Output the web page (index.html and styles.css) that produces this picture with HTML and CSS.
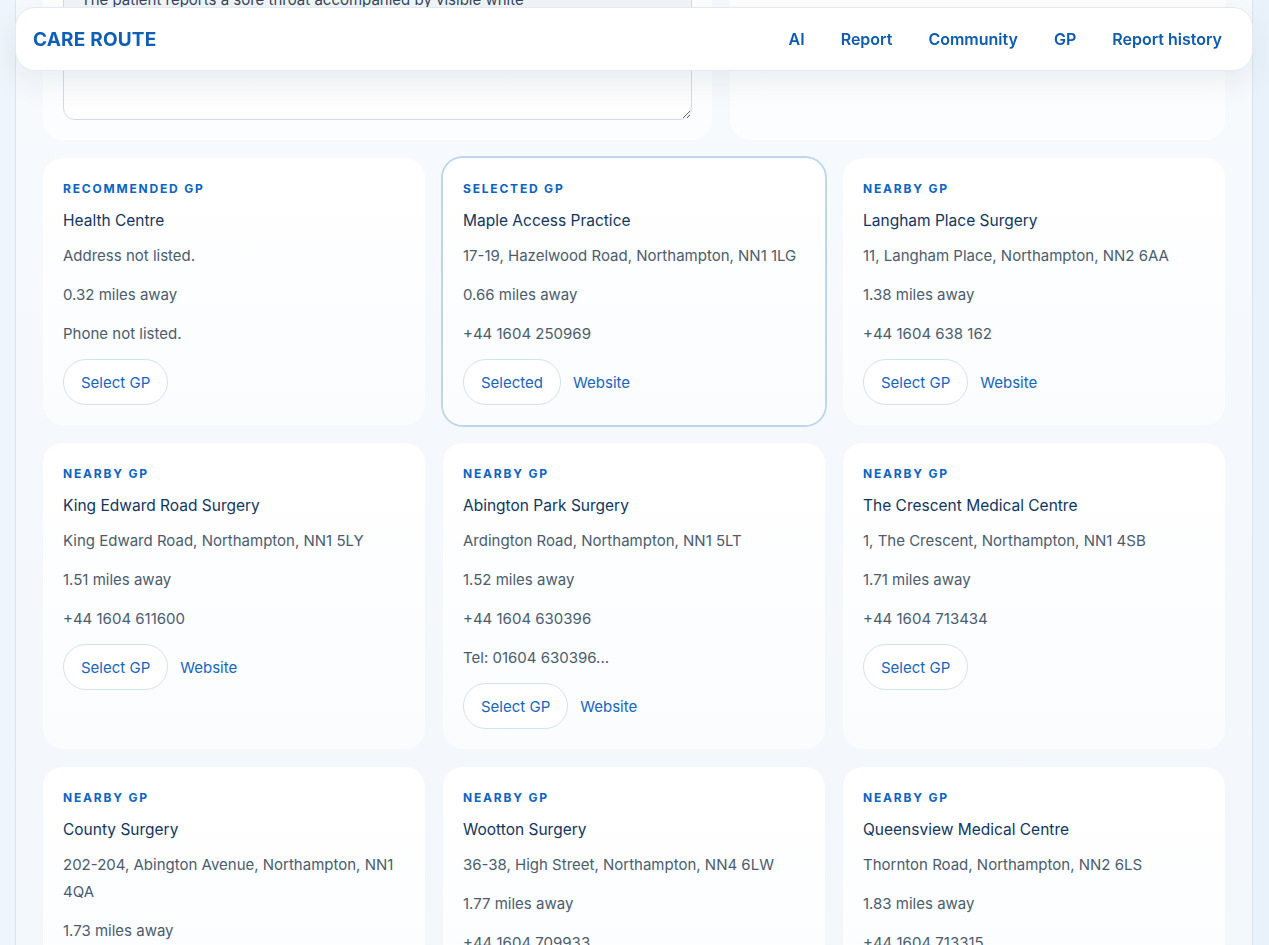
FILE: index.html
```html
<!DOCTYPE html>
<html lang="en">
<head>
<meta charset="utf-8">
<title>Care Route</title>
<link rel="stylesheet" href="styles.css">
</head>
<body>
<header class="topbar">
  <div class="brand">CARE ROUTE</div>
  <nav class="nav">
    <a href="#">AI</a>
    <a href="#">Report</a>
    <a href="#">Community</a>
    <a href="#">GP</a>
    <a href="#">Report history</a>
  </nav>
</header>

<main class="shell">
  <section class="top-row">
    <div class="panel">
      <textarea class="symptoms">The patient reports a sore throat accompanied by visible white
patches on the tonsils.</textarea>
    </div>
    <div class="panel"></div>
  </section>

  <section class="gp-grid">
    <article class="card">
      <div class="tag">Recommended GP</div>
      <h3 class="name">Health Centre</h3>
      <p>Address not listed.</p>
      <p>0.32 miles away</p>
      <p>Phone not listed.</p>
      <div class="actions"><button class="pill">Select GP</button></div>
    </article>

    <article class="card selected">
      <div class="tag">Selected GP</div>
      <h3 class="name">Maple Access Practice</h3>
      <p>17-19, Hazelwood Road, Northampton, NN1 1LG</p>
      <p>0.66 miles away</p>
      <p>+44 1604 250969</p>
      <div class="actions"><button class="pill">Selected</button><a class="link" href="#">Website</a></div>
    </article>

    <article class="card">
      <div class="tag">Nearby GP</div>
      <h3 class="name">Langham Place Surgery</h3>
      <p>11, Langham Place, Northampton, NN2 6AA</p>
      <p>1.38 miles away</p>
      <p>+44 1604 638 162</p>
      <div class="actions"><button class="pill">Select GP</button><a class="link" href="#">Website</a></div>
    </article>

    <article class="card">
      <div class="tag">Nearby GP</div>
      <h3 class="name">King Edward Road Surgery</h3>
      <p>King Edward Road, Northampton, NN1 5LY</p>
      <p>1.51 miles away</p>
      <p>+44 1604 611600</p>
      <div class="actions"><button class="pill">Select GP</button><a class="link" href="#">Website</a></div>
    </article>

    <article class="card">
      <div class="tag">Nearby GP</div>
      <h3 class="name">Abington Park Surgery</h3>
      <p>Ardington Road, Northampton, NN1 5LT</p>
      <p>1.52 miles away</p>
      <p>+44 1604 630396</p>
      <p>Tel: 01604 630396...</p>
      <div class="actions"><button class="pill">Select GP</button><a class="link" href="#">Website</a></div>
    </article>

    <article class="card">
      <div class="tag">Nearby GP</div>
      <h3 class="name">The Crescent Medical Centre</h3>
      <p>1, The Crescent, Northampton, NN1 4SB</p>
      <p>1.71 miles away</p>
      <p>+44 1604 713434</p>
      <div class="actions"><button class="pill">Select GP</button></div>
    </article>

    <article class="card">
      <div class="tag">Nearby GP</div>
      <h3 class="name">County Surgery</h3>
      <p class="addr-wide">202-204, Abington Avenue, Northampton, NN1 4QA</p>
      <p>1.73 miles away</p>
      <p>+44 1604 622644</p>
      <div class="actions"><button class="pill">Select GP</button><a class="link" href="#">Website</a></div>
    </article>

    <article class="card">
      <div class="tag">Nearby GP</div>
      <h3 class="name">Wootton Surgery</h3>
      <p>36-38, High Street, Northampton, NN4 6LW</p>
      <p>1.77 miles away</p>
      <p>+44 1604 709933</p>
      <div class="actions"><button class="pill">Select GP</button><a class="link" href="#">Website</a></div>
    </article>

    <article class="card">
      <div class="tag">Nearby GP</div>
      <h3 class="name">Queensview Medical Centre</h3>
      <p>Thornton Road, Northampton, NN2 6LS</p>
      <p>1.83 miles away</p>
      <p>+44 1604 713315</p>
      <div class="actions"><button class="pill">Select GP</button><a class="link" href="#">Website</a></div>
    </article>
  </section>
</main>
</body>
</html>
```

FILE: styles.css
```css
* { box-sizing: border-box; }

html, body {
  margin: 0;
  padding: 0;
}

body {
  font-family: Inter, "Noto Sans", "Liberation Sans", sans-serif;
  color: #4b5c6e;
  background: linear-gradient(90deg, #eef5fb 0%, #e9f2fa 100%);
  min-height: 100vh;
}

.topbar {
  position: fixed;
  top: 7px;
  left: 15px;
  right: 16px;
  height: 64px;
  z-index: 10;
  display: flex;
  align-items: center;
  justify-content: space-between;
  padding: 0 20px 0 17px;
  background: #ffffff;
  border: 1px solid #e1eaf4;
  border-radius: 20px;
  box-shadow: 0 12px 30px rgba(20, 50, 90, 0.07);
}

.brand {
  font-size: 19px;
  font-weight: 700;
  letter-spacing: 0.2px;
  color: #0f5fb6;
}

.nav {
  display: flex;
  gap: 16px;
}

.nav a {
  padding: 6px 10px;
  font-size: 16px;
  font-weight: 600;
  color: #0e5cae;
  text-decoration: none;
}

.shell {
  margin: -75px 16px 0 15px;
  padding: 28px 27px 40px;
  background: linear-gradient(180deg, #f7fafd 0%, #f2f7fc 100%);
  border-left: 1px solid #d8e6f2;
  border-right: 1px solid #d8e6f2;
}

.top-row {
  display: grid;
  grid-template-columns: 669px 1fr;
  gap: 18px;
  margin-bottom: 18px;
}

.panel {
  padding: 20px;
  border-radius: 20px;
  background: linear-gradient(180deg, #ffffff 0%, #fbfdfe 100%);
}

.symptoms {
  display: block;
  width: 100%;
  height: 147px;
  padding: 14px 17px;
  font-family: Inter, "Noto Sans", "Liberation Sans", sans-serif;
  font-size: 15px;
  line-height: 24px;
  color: #33475b;
  border: 1px solid #cfdcea;
  border-radius: 12px;
  background: linear-gradient(180deg, #eef2f6 0%, #ffffff 100%);
  resize: vertical;
  outline: none;
}

.gp-grid {
  display: grid;
  grid-template-columns: repeat(3, 1fr);
  column-gap: 18px;
  row-gap: 18px;
}

.card {
  padding: 21px 20px 20px;
  border-radius: 20px;
  background: linear-gradient(180deg, #ffffff 0%, #fafcfe 100%);
}

.card.selected {
  box-shadow: 0 0 0 2px #bcd6ee;
}

.tag {
  font-size: 12px;
  line-height: 20px;
  font-weight: 700;
  letter-spacing: 1.8px;
  text-transform: uppercase;
  color: #0b64c2;
  margin-bottom: 8px;
}

.name {
  margin: 0 0 8px;
  font-size: 15.5px;
  line-height: 27px;
  font-weight: 400;
  color: #11365e;
}

.card p {
  margin: 0 0 12px;
  font-size: 15px;
  line-height: 27px;
  color: #4b5c6e;
}

.card p.addr-wide {
  max-width: 340px;
}

.actions {
  display: flex;
  align-items: center;
  gap: 12px;
}

.pill {
  height: 46px;
  padding: 0 17px;
  font-family: Inter, "Noto Sans", "Liberation Sans", sans-serif;
  font-size: 15px;
  color: #1565c0;
  background: #ffffff;
  border: 1px solid #d3e2f1;
  border-radius: 23px;
  cursor: pointer;
}

.link {
  font-size: 15px;
  color: #1565c0;
  text-decoration: none;
}
```
